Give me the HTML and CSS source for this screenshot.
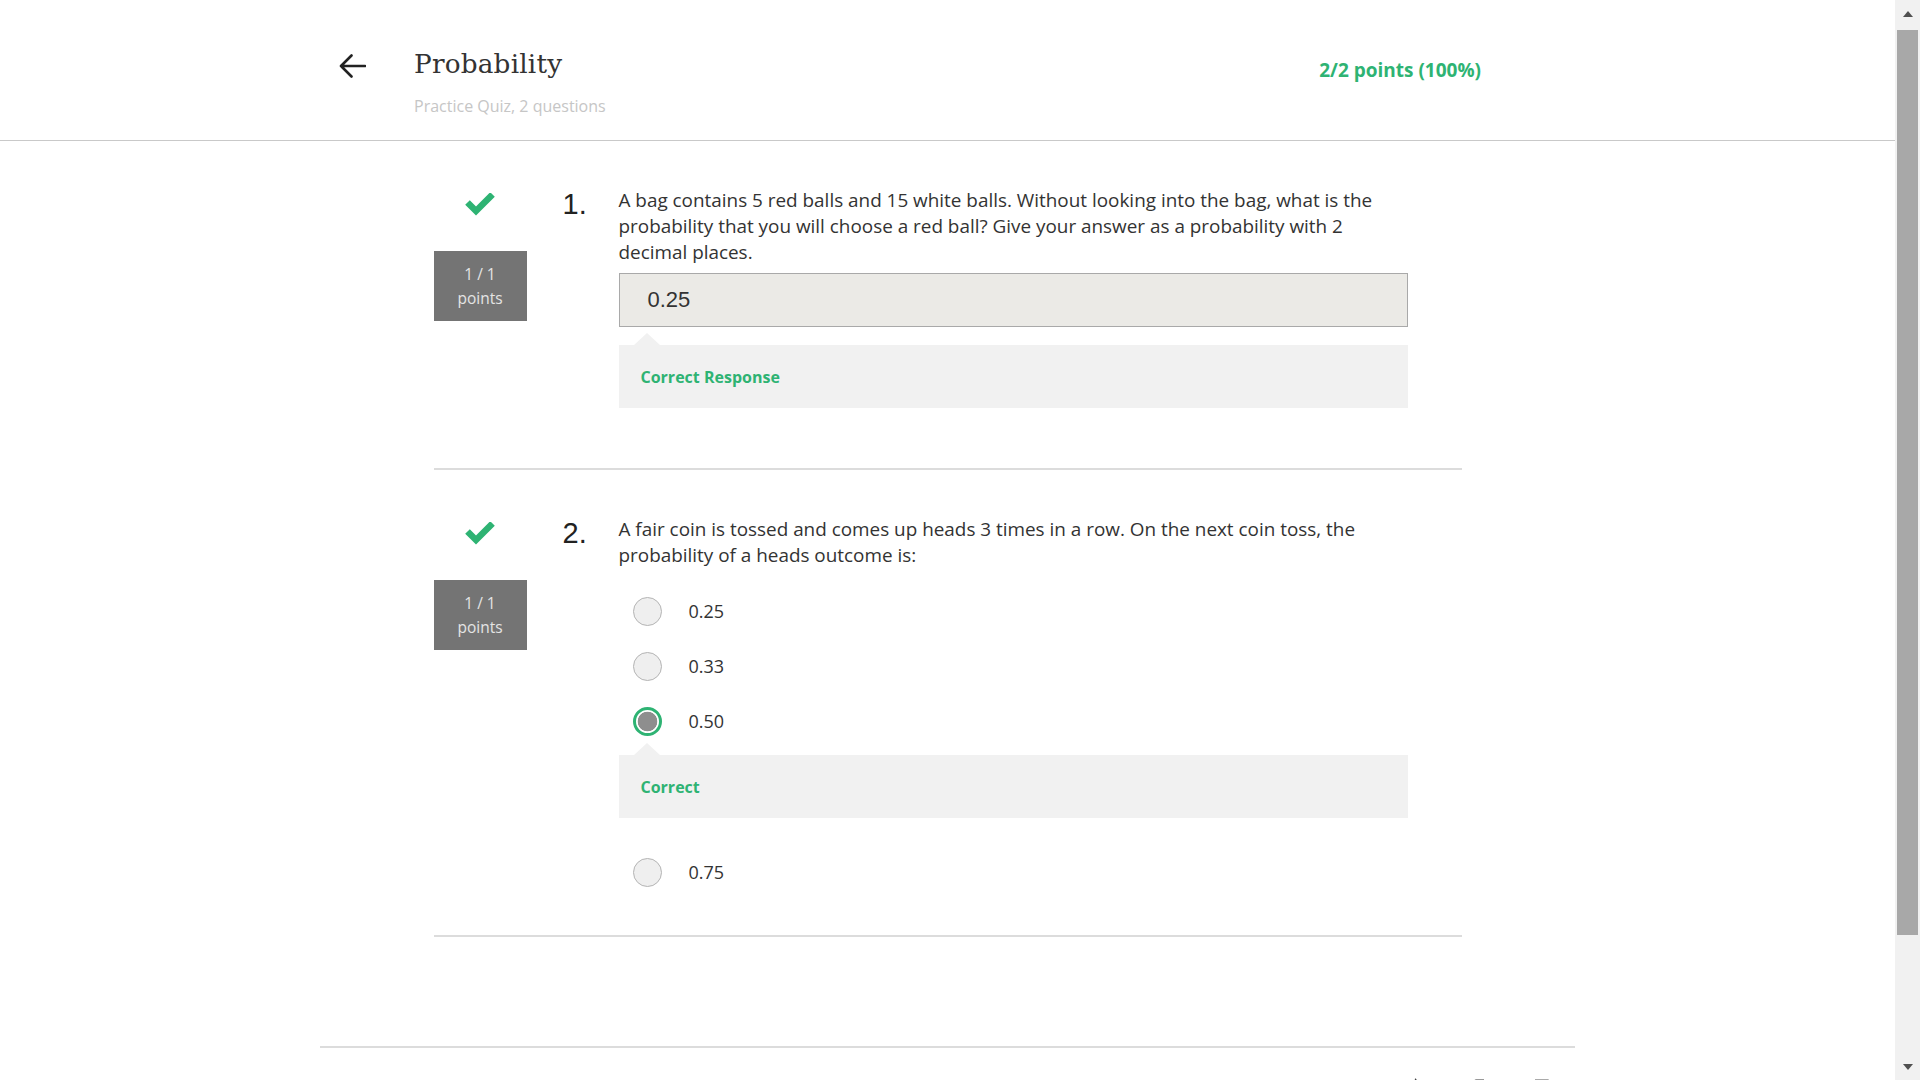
FILE: index.html
```html
<!DOCTYPE html>
<html lang="en">
<head>
<meta charset="utf-8">
<title>Probability - Practice Quiz</title>
<link rel="stylesheet" href="styles.css">
</head>
<body>
<div class="app">
  <div class="page">
    <header class="topbar">
      <div class="topbar-inner">
        <a class="back" href="#" aria-label="Back">
          <svg width="28" height="26" viewBox="0 0 28 26"><path d="M27 13H3M13.5 2.5L3 13l10.5 10.5" fill="none" stroke="#222" stroke-width="2.6" stroke-linecap="round" stroke-linejoin="round"/></svg>
        </a>
        <div class="title-block">
          <h1 class="title">Probability</h1>
          <div class="subtitle">Practice Quiz, 2 questions</div>
        </div>
        <div class="score">2/2 points (100%)</div>
      </div>
    </header>

    <main class="quiz">
      <section class="question">
        <div class="status">
          <svg class="check" width="30" height="23" viewBox="0 0 30 23"><polyline points="2.5,9.5 11,18 27.5,1.5" fill="none" stroke="#2eb373" stroke-width="6.5" stroke-linejoin="miter"/></svg>
          <div class="pts">1 / 1<br>points</div>
        </div>
        <div class="num">1.</div>
        <div class="body">
          <p class="prompt">A bag contains 5 red balls and 15 white balls. Without looking into the bag, what is the probability that you will choose a red ball? Give your answer as a probability with 2 decimal places.</p>
          <div class="answer-input">0.25</div>
          <div class="feedback">Correct Response</div>
        </div>
      </section>

      <section class="question q2">
        <div class="status">
          <svg class="check" width="30" height="23" viewBox="0 0 30 23"><polyline points="2.5,9.5 11,18 27.5,1.5" fill="none" stroke="#2eb373" stroke-width="6.5" stroke-linejoin="miter"/></svg>
          <div class="pts">1 / 1<br>points</div>
        </div>
        <div class="num">2.</div>
        <div class="body">
          <p class="prompt">A fair coin is tossed and comes up heads 3 times in a row. On the next coin toss, the probability of a heads outcome is:</p>
          <ul class="options">
            <li class="option"><span class="radio"></span><span class="label">0.25</span></li>
            <li class="option"><span class="radio"></span><span class="label">0.33</span></li>
            <li class="option"><span class="radio selected"></span><span class="label">0.50</span></li>
            <li class="option-feedback"><div class="feedback">Correct</div></li>
            <li class="option last"><span class="radio"></span><span class="label">0.75</span></li>
          </ul>
        </div>
      </section>
    </main>

    <footer class="footer">
      <div class="footer-inner">
        <svg class="foot-icon" width="20" height="20" viewBox="0 0 20 20"><path d="M7 1.5c1.5 0 2 1.5 1.6 3.2L8 8h7c1.2 0 2 1 1.8 2.2l-1.2 6.3c-.2 1-1 1.5-2 1.5H6V8.5z" fill="#444"/><rect x="1.5" y="8.5" width="3" height="9.5" fill="#444"/></svg>
        <svg class="foot-icon faint" width="20" height="20" viewBox="0 0 20 20"><path d="M13 18.5c-1.5 0-2-1.5-1.6-3.2L12 12H5c-1.2 0-2-1-1.8-2.2l1.2-6.3c.2-1 1-1.5 2-1.5H14v9.5z" fill="#999"/></svg>
        <svg class="foot-icon faint" width="20" height="20" viewBox="0 0 20 20"><path d="M4 2v16M4 3h11l-3 4 3 4H4" fill="none" stroke="#aaa" stroke-width="2"/></svg>
      </div>
    </footer>
  </div>

  <div class="scrollbar" aria-hidden="true">
    <div class="sb-btn"><span class="tri-up"></span></div>
    <div class="sb-thumb"></div>
    <div class="sb-space"></div>
    <div class="sb-btn down"><span class="tri-down"></span></div>
  </div>
</div>
</body>
</html>
```

FILE: styles.css
```css
* { box-sizing: border-box; }
html, body { margin: 0; padding: 0; height: 100%; }
body {
  font-family: "Open Sans", "Liberation Sans", sans-serif;
  color: #333;
  background: #fff;
}
.app {
  display: flex;
  height: 100vh;
  overflow: hidden;
}
.page {
  flex: 1;
  overflow: hidden;
  min-width: 0;
}

/* Header */
.topbar {
  height: 141px;
  border-bottom: 1px solid #c9c9c9;
}
.topbar-inner {
  width: 1255px;
  margin: 0 auto;
  height: 140px;
  display: flex;
  align-items: flex-start;
  padding-left: 18px;
  padding-right: 94px;
}
.back {
  display: block;
  margin-top: 53px;
  width: 28px;
  height: 26px;
}
.back svg { display: block; }
.title-block {
  margin-left: 48px;
  margin-top: 47px;
}
.title {
  margin: 0;
  font-family: "DejaVu Serif", "Liberation Serif", serif;
  font-weight: normal;
  font-size: 26.3px;
  line-height: 34px;
  color: #333;
  letter-spacing: 0.2px;
}
.subtitle {
  margin-top: 15px;
  font-size: 16px;
  line-height: 20px;
  color: #c6c6c6;
}
.score {
  margin-left: auto;
  margin-top: 57px;
  font-size: 19px;
  line-height: 26px;
  font-weight: 700;
  color: #2eb373;
}

/* Quiz */
.quiz {
  width: 1028px;
  margin: 0 auto;
}
.question {
  display: flex;
  align-items: flex-start;
  padding-top: 46px;
  padding-bottom: 60px;
  border-bottom: 2px solid #dcdcdc;
}
.question.q2 {
  padding-top: 46px;
  padding-bottom: 35px;
}
.status {
  width: 93px;
  flex: none;
  display: flex;
  flex-direction: column;
  align-items: center;
}
.check {
  display: block;
  margin-top: 6px;
}
.pts {
  margin-top: 35px;
  width: 93px;
  height: 70px;
  background: #747474;
  color: #e4e4e4;
  font-size: 15.5px;
  line-height: 24px;
  text-align: center;
  display: flex;
  align-items: center;
  justify-content: center;
}
.num {
  width: 56px;
  flex: none;
  margin-left: 36px;
  font-family: "Liberation Sans", Arial, sans-serif;
  font-size: 29px;
  line-height: 30px;
  color: #222;
  padding-top: 1.5px;
}
.body {
  width: 789px;
  flex: none;
}
.prompt {
  margin: 0;
  font-size: 18.9px;
  line-height: 26px;
  color: #333;
}
.answer-input {
  margin-top: 8px;
  height: 54px;
  border: 1px solid #a9a9a9;
  background: #ebeae6;
  display: flex;
  align-items: center;
  padding-left: 28px;
  font-family: "Liberation Sans", Arial, sans-serif;
  font-size: 22px;
  color: #333;
}
.feedback {
  position: relative;
  margin-top: 18px;
  height: 63px;
  background: #f1f1f1;
  display: flex;
  align-items: center;
  padding-left: 22px;
  font-size: 16px;
  font-weight: 700;
  color: #2eb373;
}
.feedback::before {
  content: "";
  position: absolute;
  top: -12px;
  left: 15px;
  border-left: 13px solid transparent;
  border-right: 13px solid transparent;
  border-bottom: 12px solid #f1f1f1;
}

/* Options */
.options {
  list-style: none;
  margin: 15.5px 0 0;
  padding: 0;
}
.option {
  height: 55px;
  display: flex;
  align-items: center;
  padding-left: 14px;
}
.option.last { margin-top: 26.5px; }
.option-feedback .feedback { margin-top: 6.5px; }
.radio {
  width: 29px;
  height: 29px;
  border-radius: 50%;
  border: 1px solid #b4b4b4;
  background: #efefef;
  flex: none;
}
.radio.selected {
  border: 3px solid #2eb373;
  background: radial-gradient(circle closest-side, #8e8e8e 0, #8e8e8e 82%, #ffffff 88%);
}
.label {
  margin-left: 27px;
  font-size: 18px;
  color: #333;
}

/* Footer */
.footer {
  margin-top: 109px;
}
.footer-inner {
  width: 1255px;
  margin: 0 auto;
  border-top: 2px solid #dcdcdc;
  padding-top: 29px;
  padding-left: 1088px;
  display: flex;
  gap: 42px;
}
.foot-icon { display: block; flex: none; }

/* Scrollbar */
.scrollbar {
  width: 25px;
  flex: none;
  background: #f1f1f1;
  display: flex;
  flex-direction: column;
  height: 100vh;
}
.sb-btn {
  height: 28px;
  display: flex;
  align-items: center;
  justify-content: center;
}
.sb-btn.down { height: 26px; }
.tri-up {
  width: 0; height: 0;
  border-left: 5.5px solid transparent;
  border-right: 5.5px solid transparent;
  border-bottom: 6px solid #505050;
}
.tri-down {
  width: 0; height: 0;
  border-left: 5.5px solid transparent;
  border-right: 5.5px solid transparent;
  border-top: 6px solid #505050;
}
.sb-thumb {
  margin: 2px 2px 0 2px;
  height: 905px;
  background: #a8a8a8;
}
.sb-space { flex: 1; }
```
